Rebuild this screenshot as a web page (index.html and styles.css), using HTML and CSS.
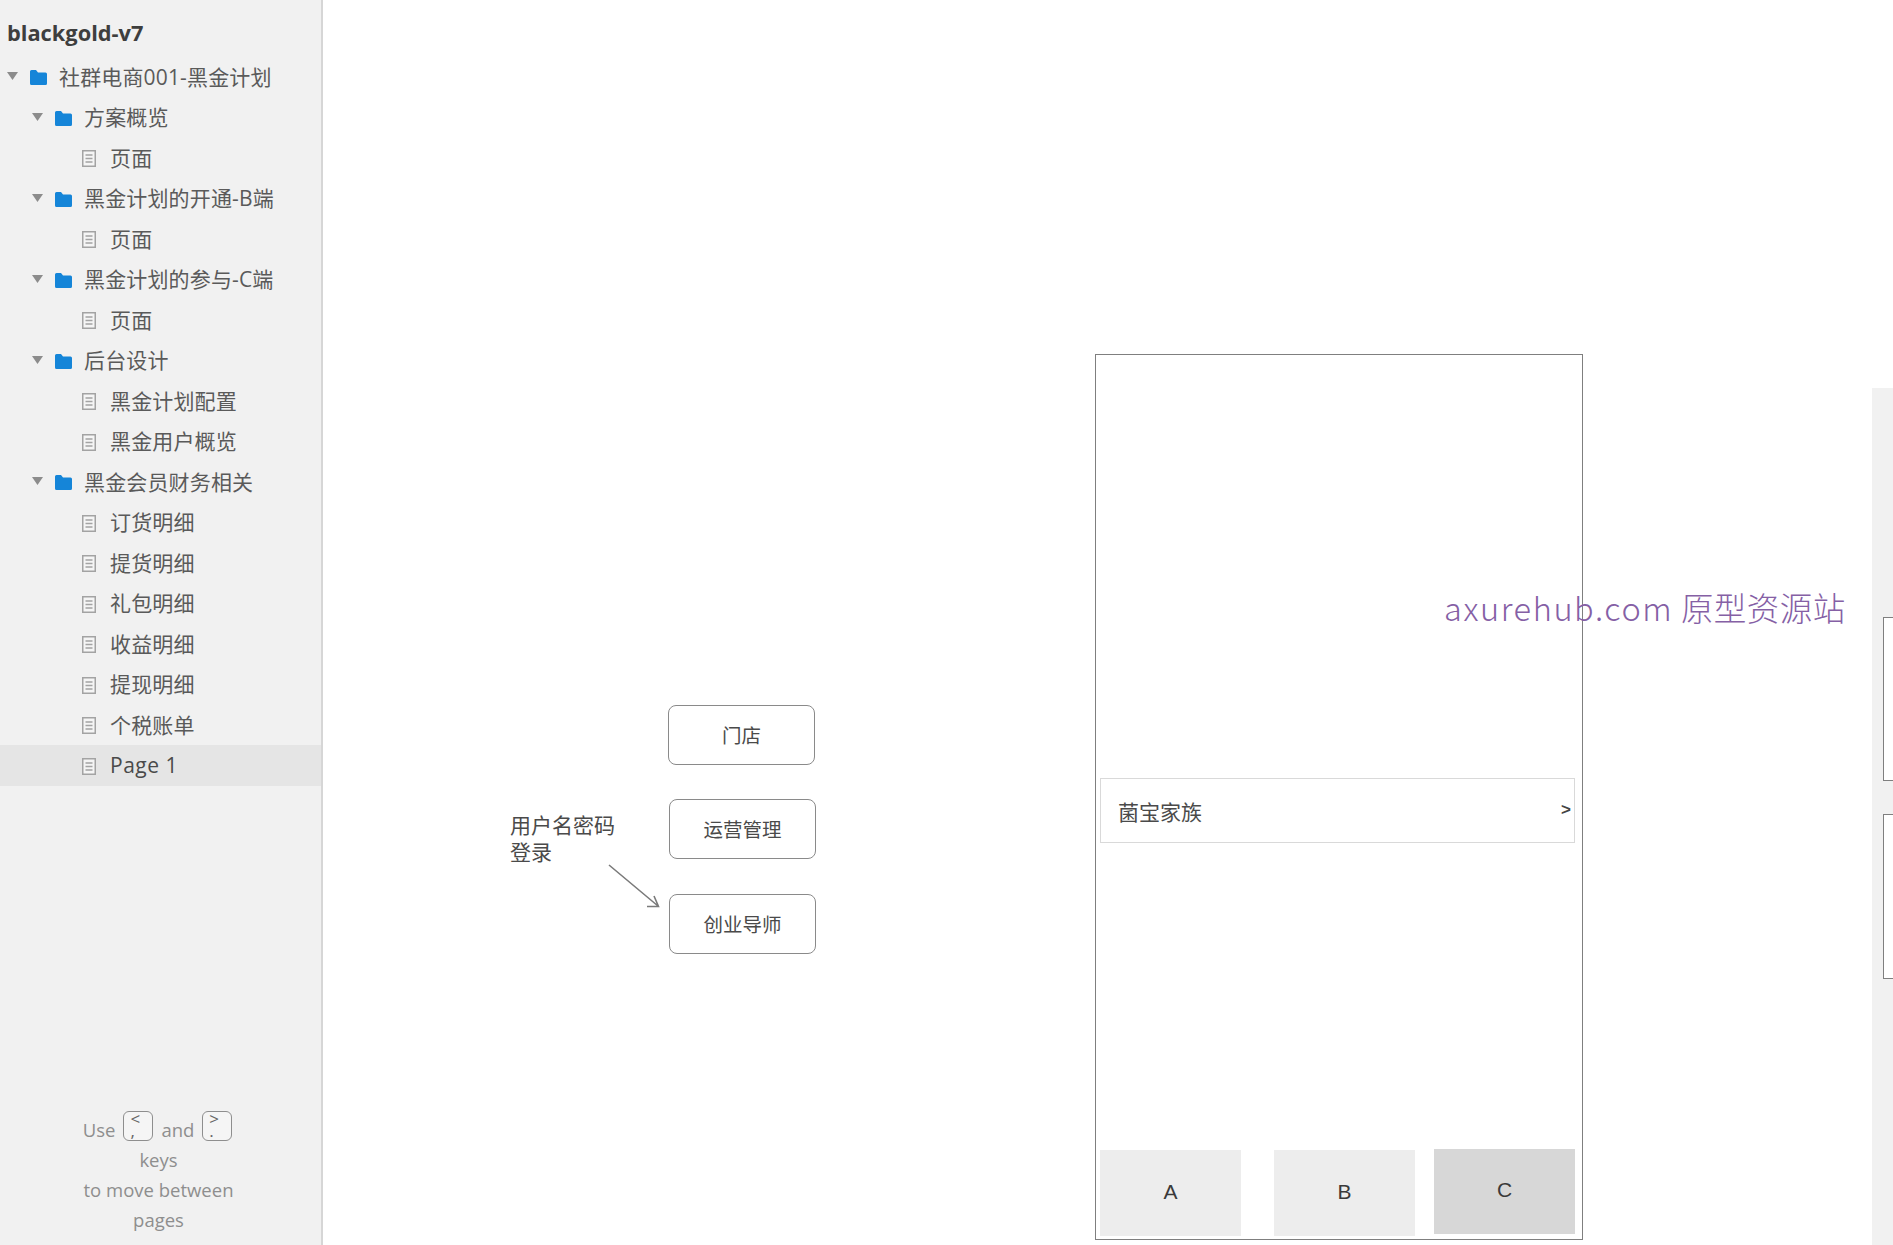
FILE: index.html
```html
<!DOCTYPE html>
<html lang="zh">
<head>
<meta charset="utf-8">
<title>blackgold-v7</title>
<link rel="stylesheet" href="styles.css">
</head>
<body>
<svg class="defs" width="0" height="0" aria-hidden="true">
  <symbol id="tri" viewBox="0 0 11 8"><path d="M0 0H11L5.5 8Z" fill="#8c8c8c"/></symbol>
  <symbol id="folder" viewBox="0 0 17 15"><path d="M0 1.5Q0 0 1.500 0H6L8 2.500H15.500Q17 2.500 17 4V13.500Q17 15 15.500 15H1.500Q0 15 0 13.500Z" fill="#1585d8"/></symbol>
  <symbol id="page" viewBox="0 0 14 17"><path d="M.75.75H13.250V16.250H.75Z" fill="#f5f5f5" stroke="#a3a3a3" stroke-width="1.500"/><path d="M3.500 5H10.500M3.500 8.500H10.500M3.500 12H10.500" stroke="#a3a3a3" stroke-width="1.300"/></symbol>
</svg>
<div class="app">
  <aside class="sidebar">
    <h1 class="project">blackgold-v7</h1>
    <ul class="tree">
      <li class="row lv0"><svg class="tri"><use href="#tri"/></svg><svg class="folder"><use href="#folder"/></svg><span>社群电商001-黑金计划</span></li>
      <li class="row lv1"><svg class="tri"><use href="#tri"/></svg><svg class="folder"><use href="#folder"/></svg><span>方案概览</span></li>
      <li class="row lv2"><svg class="page"><use href="#page"/></svg><span>页面</span></li>
      <li class="row lv1"><svg class="tri"><use href="#tri"/></svg><svg class="folder"><use href="#folder"/></svg><span>黑金计划的开通-B端</span></li>
      <li class="row lv2"><svg class="page"><use href="#page"/></svg><span>页面</span></li>
      <li class="row lv1"><svg class="tri"><use href="#tri"/></svg><svg class="folder"><use href="#folder"/></svg><span>黑金计划的参与-C端</span></li>
      <li class="row lv2"><svg class="page"><use href="#page"/></svg><span>页面</span></li>
      <li class="row lv1"><svg class="tri"><use href="#tri"/></svg><svg class="folder"><use href="#folder"/></svg><span>后台设计</span></li>
      <li class="row lv2"><svg class="page"><use href="#page"/></svg><span>黑金计划配置</span></li>
      <li class="row lv2"><svg class="page"><use href="#page"/></svg><span>黑金用户概览</span></li>
      <li class="row lv1"><svg class="tri"><use href="#tri"/></svg><svg class="folder"><use href="#folder"/></svg><span>黑金会员财务相关</span></li>
      <li class="row lv2"><svg class="page"><use href="#page"/></svg><span>订货明细</span></li>
      <li class="row lv2"><svg class="page"><use href="#page"/></svg><span>提货明细</span></li>
      <li class="row lv2"><svg class="page"><use href="#page"/></svg><span>礼包明细</span></li>
      <li class="row lv2"><svg class="page"><use href="#page"/></svg><span>收益明细</span></li>
      <li class="row lv2"><svg class="page"><use href="#page"/></svg><span>提现明细</span></li>
      <li class="row lv2"><svg class="page"><use href="#page"/></svg><span>个税账单</span></li>
      <li class="row lv2 selected"><svg class="page"><use href="#page"/></svg><span>Page 1</span></li>
    </ul>
    <div class="hint">
      <div class="hint-keys"><span>Use</span><span class="key">&lt;<br>,</span><span>and</span><span class="key">&gt;<br>.</span></div>
      <div class="hint-line">keys</div>
      <div class="hint-line">to move between</div>
      <div class="hint-line">pages</div>
    </div>
  </aside>
  <main class="canvas">
    <div class="node btn btn-store"><span>门店</span></div>
    <div class="node btn btn-ops"><span>运营管理</span></div>
    <div class="node btn btn-mentor"><span>创业导师</span></div>
    <div class="node note">用户名密码<br>登录</div>
    <svg class="node arrow" viewBox="0 0 56 46"><path d="M1 1L50 42M39 42.500H50.500L46 32" fill="none" stroke="#7a7a7a" stroke-width="1.600"/></svg>
    <div class="node phone">
      <div class="list-row"><span>菌宝家族</span><b class="chev">&gt;</b></div>
    </div>
    <div class="node tab tab-a">A</div>
    <div class="node tab tab-b">B</div>
    <div class="node tab tab-c">C</div>
    <div class="node side-panel">
      <div class="mini mini-one"></div>
      <div class="mini mini-two"></div>
    </div>
    <div class="node watermark"><span class="wm-latin">axurehub.com</span> 原型资源站</div>
  </main>
</div>
</body>
</html>
```

FILE: styles.css
```css
* { box-sizing: border-box; }
html, body { margin: 0; height: 100%; overflow: hidden; background: #fff; }
.defs { position: absolute; }
.app { display: flex; width: 1893px; height: 1245px; font-family: "Open Sans", "Noto Sans CJK SC", sans-serif; }

.sidebar { width: 323px; flex: none; display: flex; flex-direction: column; background: #f1f1f1; border-right: 2px solid #d6d6d6; color: #4a4a4a; }
.project { margin: 0; padding: 17px 0 0 7px; height: 56.400px; font-size: 21.800px; line-height: 32px; font-weight: 700; color: #3e3e3e; }
.tree { list-style: none; margin: 0; padding: 0; }
.row { display: flex; align-items: center; height: 40.500px; font-size: 21px; line-height: 28px; letter-spacing: .15px; font-family: "Open Sans", "Noto Sans CJK SC", sans-serif; font-weight: 400; color: #5a5a5a; white-space: nowrap; }
.row .tri { width: 11px; height: 8px; flex: none; margin-top: -1px; }
.row .folder { width: 17px; height: 15px; flex: none; margin-left: 12px; margin-top: 2px; }
.row .page { width: 14px; height: 17px; flex: none; margin-top: 2px; }
.row span { margin-left: 12px; }
.lv0 { padding-left: 7px; }
.lv1 { padding-left: 32px; }
.lv2 { padding-left: 82px; }
.lv2 span { margin-left: 14px; }
.selected { background: #e5e5e5; height: 41px; }
.selected span { color: #4a4a4a; letter-spacing: .5px; }

.hint { margin-top: auto; padding: 0 4px 10px 0; font-size: 18.500px; line-height: 30px; text-align: center; color: #8e8e8e; font-weight: 400; }
.hint-keys { display: flex; justify-content: center; align-items: flex-end; gap: 8px; height: 30px; padding-right: 2px; }
.hint-line { height: 30px; white-space: nowrap; }
.key { display: block; width: 30px; height: 30px; margin-bottom: 4px; padding: 1px 0 0 6px; border: 1.500px solid #8e8e8e; border-radius: 6px; font-size: 17px; line-height: 12px; text-align: left; color: #666; background: #f5f5f5; }

.canvas { position: relative; flex: 1; overflow: hidden; background: #fff; font-family: "Noto Sans CJK SC", "Liberation Sans", sans-serif; color: #4a4a4a; }
.node { position: absolute; }
.btn { display: flex; align-items: center; justify-content: center; width: 147px; height: 60px; padding-bottom: 2px; border: 1.500px solid #8a8a8a; border-radius: 8px; font-size: 19.500px; background: #fff; }
.btn-store { left: 345px; top: 705px; }
.btn-ops { left: 346px; top: 799px; }
.btn-mentor { left: 346px; top: 894px; }
.note { left: 187px; top: 811px; font-size: 21px; line-height: 27px; }
.arrow { left: 285px; top: 864px; width: 56px; height: 46px; }
.phone { left: 772px; top: 354px; width: 488px; height: 886px; border: 1.500px solid #7f7f7f; background: #fff; }
.list-row { position: absolute; left: 4px; top: 423px; width: 475px; height: 65px; padding: 0 3px 0 17px; display: flex; align-items: center; justify-content: space-between; border: 1.500px solid #d9d9d9; font-size: 21px; }
.chev { font: 700 17px/1 "Liberation Sans", sans-serif; margin-top: -3px; color: #444; }
.tab { display: flex; align-items: center; justify-content: center; width: 141px; height: 86px; padding-bottom: 4px; background: #ededed; font: 21px/1 "Liberation Sans", sans-serif; color: #3a3a3a; }
.tab-a { left: 777px; top: 1150px; }
.tab-b { left: 951px; top: 1150px; }
.tab-c { left: 1111px; top: 1149px; height: 85px; background: #d7d7d7; }
.side-panel { left: 1549px; top: 388px; width: 21px; height: 857px; background: #f1f1f1; }
.mini { position: absolute; left: 11px; width: 40px; background: #fff; border: 1.500px solid #7f7f7f; }
.mini-one { top: 229px; height: 164px; }
.mini-two { top: 426px; height: 165px; }
.watermark { left: 1121px; top: 585px; font-size: 32.500px; line-height: 44px; font-weight: 300; color: #8560a5; letter-spacing: .45px; white-space: nowrap; }
.wm-latin { letter-spacing: 1.600px; }
```
